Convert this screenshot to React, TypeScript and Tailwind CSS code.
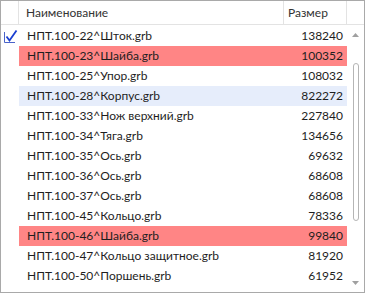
import React from 'react';

type Row = { name: string; size: number; mark?: 'red' | 'blue'; checked?: boolean };

const rows: Row[] = [
  { name: 'НПТ.100-22^Шток.grb', size: 138240, checked: true },
  { name: 'НПТ.100-23^Шайба.grb', size: 100352, mark: 'red' },
  { name: 'НПТ.100-25^Упор.grb', size: 108032 },
  { name: 'НПТ.100-28^Корпус.grb', size: 822272, mark: 'blue' },
  { name: 'НПТ.100-33^Нож верхний.grb', size: 227840 },
  { name: 'НПТ.100-34^Тяга.grb', size: 134656 },
  { name: 'НПТ.100-35^Ось.grb', size: 69632 },
  { name: 'НПТ.100-36^Ось.grb', size: 68608 },
  { name: 'НПТ.100-37^Ось.grb', size: 68608 },
  { name: 'НПТ.100-45^Кольцо.grb', size: 78336 },
  { name: 'НПТ.100-46^Шайба.grb', size: 99840, mark: 'red' },
  { name: 'НПТ.100-47^Кольцо защитное.grb', size: 81920 },
  { name: 'НПТ.100-50^Поршень.grb', size: 61952 },
];

function Check() {
  return (
    <svg width="15" height="15" viewBox="0 0 15 15" className="block">
      <path d="M1.5 3 V13.5 H12" fill="none" stroke="#4a63c9" strokeWidth="1" />
      <path d="M3.5 7.5 L6.5 11.5 L13.5 1.5" fill="none" stroke="#1a3fd1" strokeWidth="1.8" />
    </svg>
  );
}

export default function App() {
  return (
    <div
      className="w-[365px] h-[293px] bg-white border border-[#a9a9a9] flex flex-col overflow-hidden text-[12px] text-[#1e1e1e]"
      style={{ fontFamily: 'Lato, "Open Sans", sans-serif' }}
    >
      {/* header */}
      <div className="flex h-[24px] border-b border-[#e3e3e3] shrink-0">
        <div className="w-[18px] border-r border-[#e3e3e3]" />
        <div className="w-[265px] border-r border-[#e3e3e3] pl-[7px] pt-[1px] flex items-center text-[#333]">Наименование</div>
        <div className="w-[63px] border-r border-[#e3e3e3] pl-[4px] pt-[1px] flex items-center text-[#333]">Размер</div>
        <div className="flex-1" />
      </div>

      <div className="flex flex-1 min-h-0 pt-[1px]">
        <div className="flex-1 flex flex-col">
          {rows.map((r) => (
            <div key={r.name} className="flex h-[20px] items-center">
              <div className="w-[18px] h-full flex items-center justify-center">{r.checked && <Check />}</div>
              <div
                className={
                  'flex-1 h-full flex items-center justify-between pl-[8px] pr-[4px] ' +
                  (r.mark === 'red' ? 'bg-[#ff8585]' : r.mark === 'blue' ? 'bg-[#e6edfb]' : '')
                }
              >
                <span>{r.name}</span>
                <span>{r.size}</span>
              </div>
            </div>
          ))}
        </div>

        {/* scrollbar */}
        <div className="w-[17px] flex flex-col items-center">
          <div className="h-[18px] flex items-center justify-center">
            <svg width="7" height="4" viewBox="0 0 7 4"><path d="M0 4 L3.5 0 L7 4Z" fill="#a0a0a0" /></svg>
          </div>
          <div className="mt-[19px] w-[6px] h-[158px] rounded-full border border-[#b5b5b5] bg-white" />
          <div className="flex-1" />
          <div className="h-[18px] flex items-center justify-center">
            <svg width="7" height="4" viewBox="0 0 7 4"><path d="M0 0 L3.5 4 L7 0Z" fill="#a0a0a0" /></svg>
          </div>
        </div>
      </div>
    </div>
  );
}
